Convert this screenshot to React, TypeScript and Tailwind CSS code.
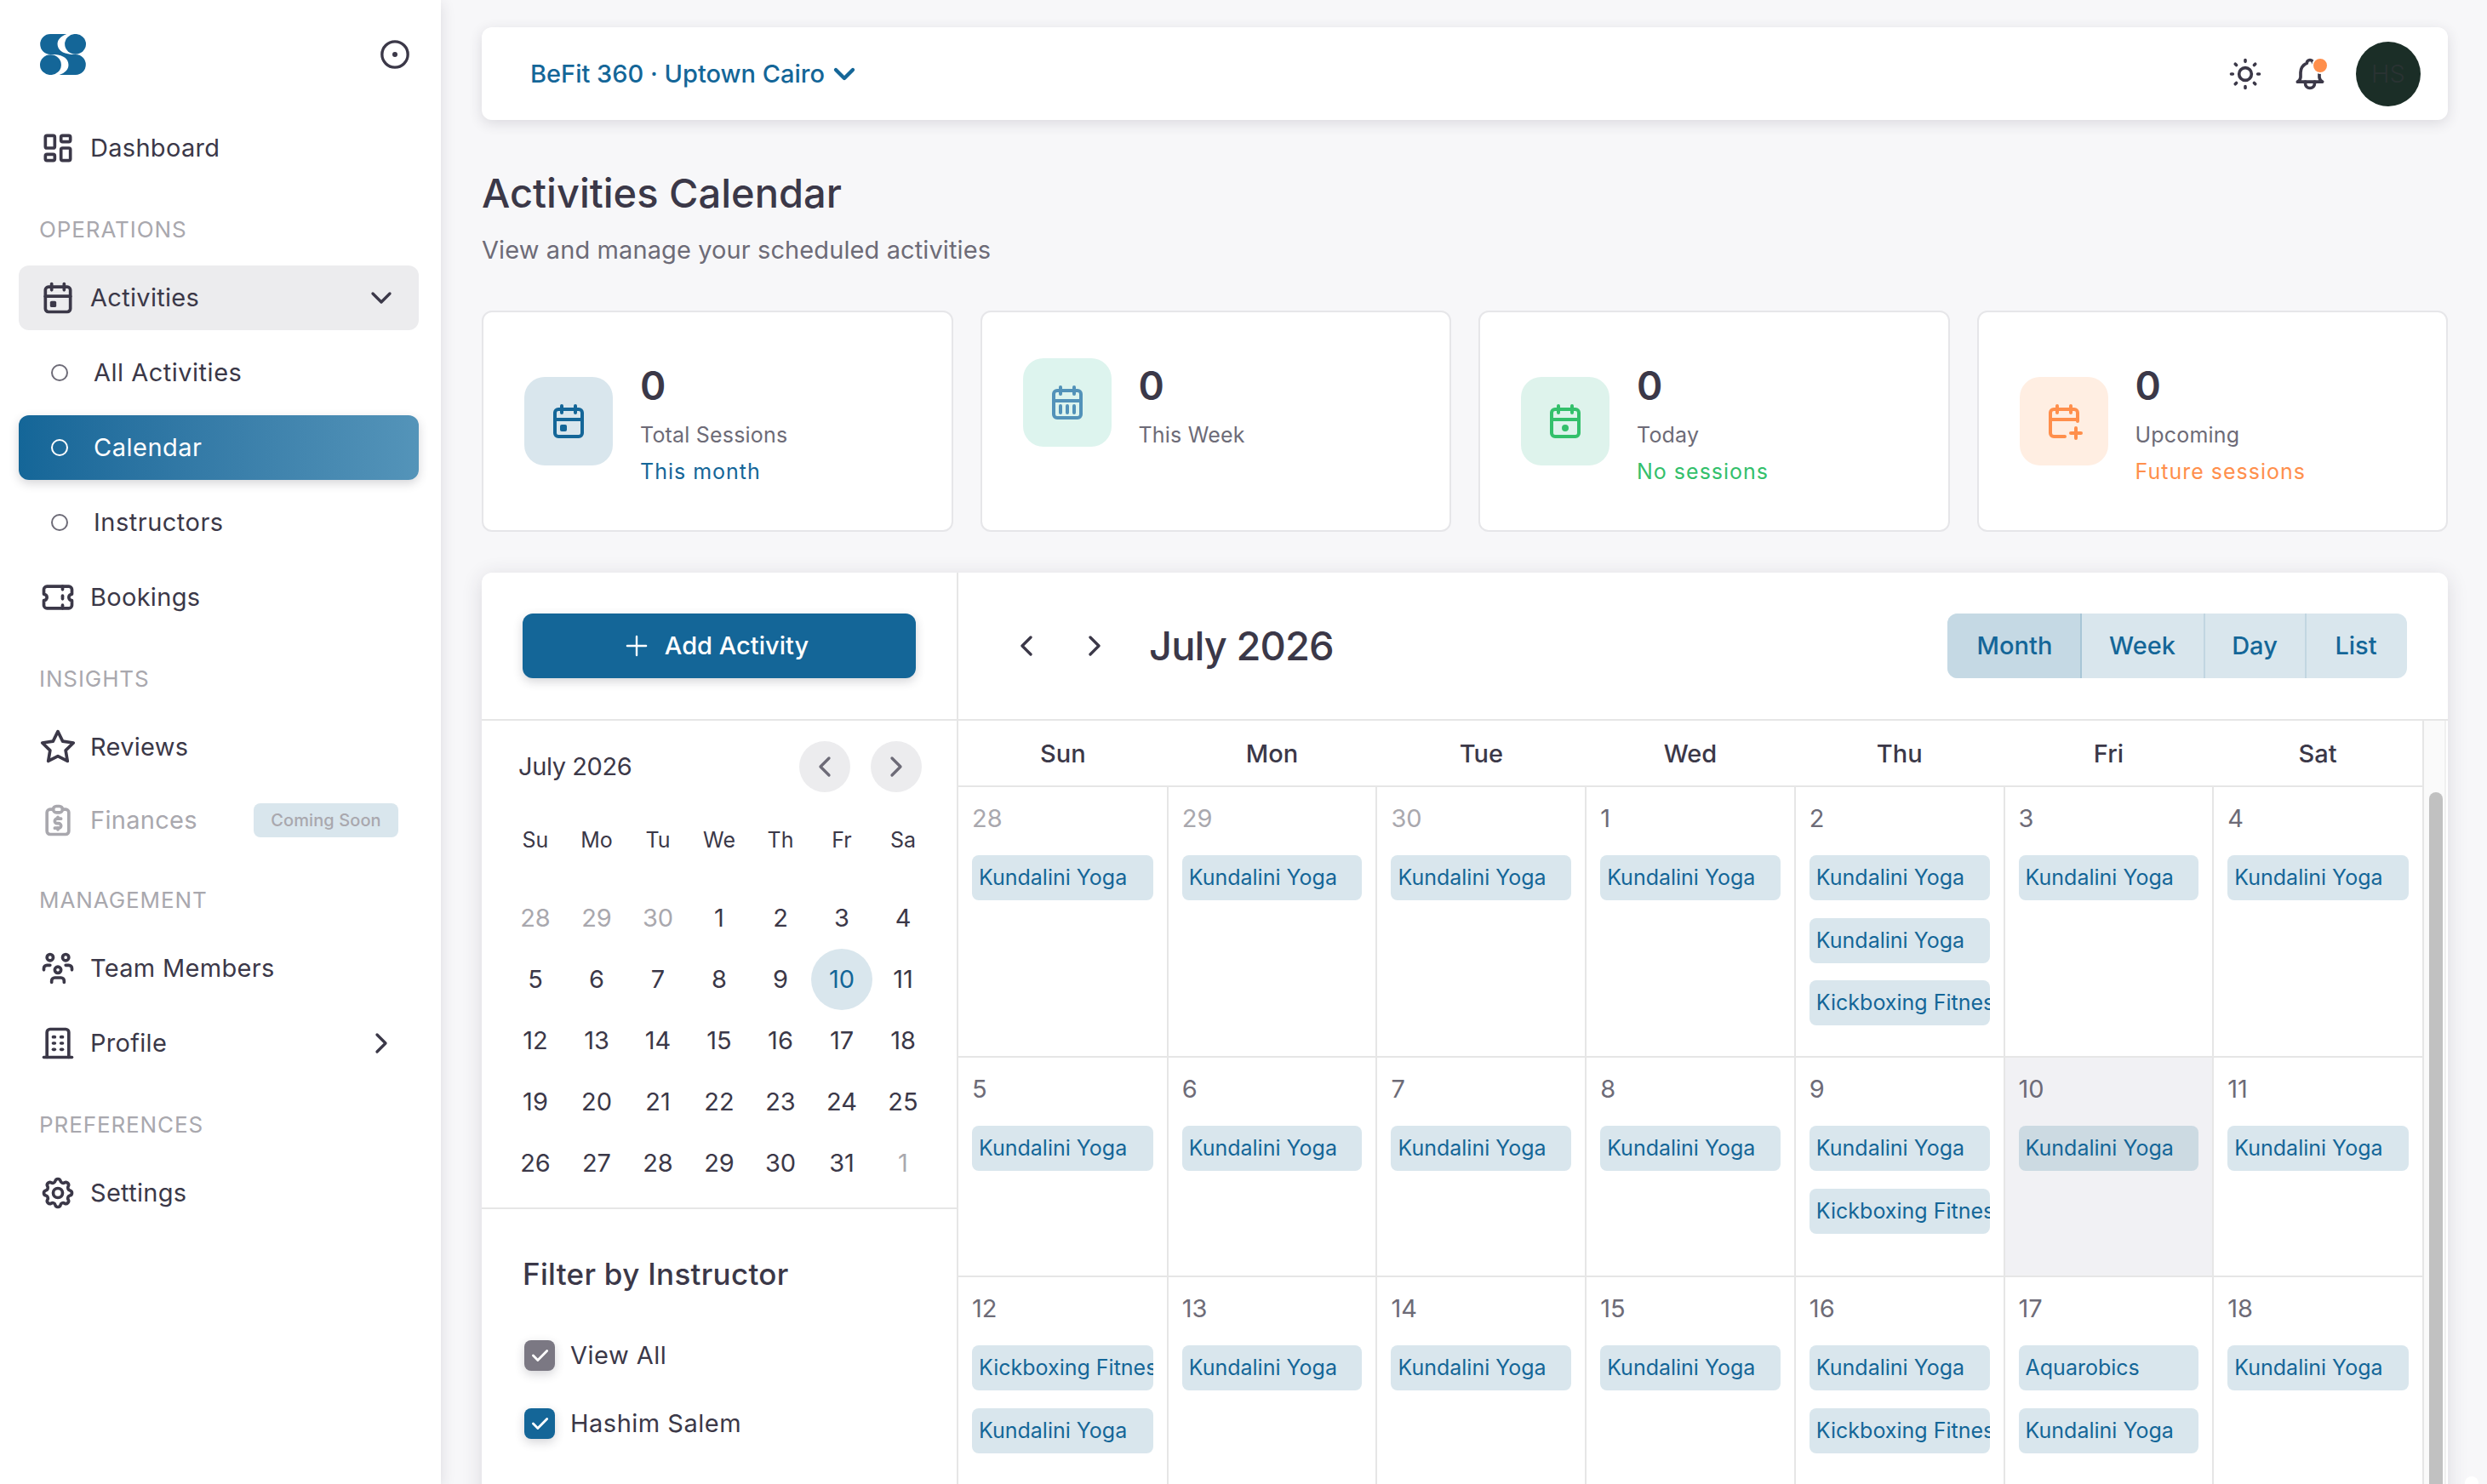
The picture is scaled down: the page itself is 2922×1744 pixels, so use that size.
import React from "react";
import type { IconType } from "react-icons";
import {
	TbBell,
	TbBuilding,
	TbCalendarEvent,
	TbCheck,
	TbChevronDown,
	TbChevronLeft,
	TbChevronRight,
	TbLayoutDashboard,
	TbPlus,
	TbReportMoney,
	TbSettings,
	TbStar,
	TbSun,
	TbTicket,
	TbUsersGroup,
} from "react-icons/tb";

const K = "Kundalini Yoga";
const B = "Kickboxing Fitness";

const weeks = [
	{
		height: "h-[318px]",
		days: [
			{ day: 28, muted: true, events: [K] },
			{ day: 29, muted: true, events: [K] },
			{ day: 30, muted: true, events: [K] },
			{ day: 1, events: [K] },
			{ day: 2, events: [K, K, B] },
			{ day: 3, events: [K] },
			{ day: 4, events: [K] },
		],
	},
	{
		height: "h-[258px]",
		days: [
			{ day: 5, events: [K] },
			{ day: 6, events: [K] },
			{ day: 7, events: [K] },
			{ day: 8, events: [K] },
			{ day: 9, events: [K, B] },
			{ day: 10, today: true, events: [K] },
			{ day: 11, events: [K] },
		],
	},
	{
		height: "h-[258px]",
		days: [
			{ day: 12, events: [B, K] },
			{ day: 13, events: [K] },
			{ day: 14, events: [K] },
			{ day: 15, events: [K] },
			{ day: 16, events: [K, B] },
			{ day: 17, events: ["Aquarobics", K] },
			{ day: 18, events: [K] },
		],
	},
] as {
	height: string;
	days: { day: number; muted?: boolean; today?: boolean; events: string[] }[];
}[];

const miniDays = [
	28, 29, 30, 1, 2, 3, 4, 5, 6, 7, 8, 9, 10, 11, 12, 13, 14, 15, 16, 17, 18, 19,
	20, 21, 22, 23, 24, 25, 26, 27, 28, 29, 30, 31, 1,
];

function Logo() {
	return (
		<svg width="54" height="48" viewBox="0 0 53.4 47.4" fill="#146698">
			<path d="M12 0H31C24 2.5 20.3 6.5 20.3 11.7C20.3 18 26 23 36 23.6H12A11.8 11.8 0 0 1 12 0Z" />
			<ellipse cx="41.1" cy="11.7" rx="12.3" ry="11.8" />
			<path d="M41.4 47.4H22.4C29.4 44.9 33.1 40.9 33.1 35.7C33.1 29.4 27.4 24.4 17.4 23.8H41.4A11.8 11.8 0 0 1 41.4 47.4Z" />
			<ellipse cx="12.3" cy="35.7" rx="12.3" ry="11.8" />
		</svg>
	);
}

function CalendarIcon({ type }: { type: string }) {
	return (
		<svg
			width="48"
			height="48"
			viewBox="0 0 24 24"
			fill="none"
			stroke="currentColor"
			strokeWidth="2"
			strokeLinecap="round"
			strokeLinejoin="round"
		>
			{type === "plus" ? (
				<path d="M12.5 21H6a2 2 0 0 1-2-2V7a2 2 0 0 1 2-2h12a2 2 0 0 1 2 2v5M16 19h6M19 16v6" />
			) : (
				<rect x="4" y="5" width="16" height="16" rx="2" />
			)}
			<path d="M16 3v4M8 3v4M4 11h16" />
			{type === "event" && <path d="M8 15h2v2H8z" />}
			{type === "month" && <path d="M8 14v4M12 14v4M16 14v4" />}
			{type === "due" && <circle cx="12" cy="16" r="1" />}
		</svg>
	);
}

function Section({ title }: { title: string }) {
	return (
		<div className="flex h-[100px] items-center pl-6 pt-[15px] text-[26px] tracking-[0.9px] text-[#a9a8ae]">
			{title}
		</div>
	);
}

function NavItem({
	icon: Icon,
	label,
	children,
	className = "",
}: {
	icon: IconType;
	label: string;
	children?: React.ReactNode;
	className?: string;
}) {
	return (
		<div
			className={`flex h-[76px] items-center gap-4 rounded-xl px-6 ${className}`}
		>
			<Icon size={44} />
			<span className="flex-1 tracking-[0.3px]">{label}</span>
			{children}
		</div>
	);
}

function SubItem({ label, active }: { label: string; active?: boolean }) {
	return (
		<div
			className={`flex h-[76px] items-center gap-[30px] rounded-xl pl-[38px] tracking-[0.5px] ${
				active
					? "bg-linear-to-r from-[#146698] to-[#5494b9] text-white shadow-[0_4px_12px_rgba(47,43,61,0.2)]"
					: ""
			}`}
		>
			<span
				className={`size-5 rounded-full border-2 ${
					active ? "border-white" : "border-[#6d6b77]"
				}`}
			/>
			{label}
		</div>
	);
}

function Sidebar() {
	return (
		<aside className="flex w-[518px] shrink-0 flex-col bg-white shadow-[0_4px_16px_rgba(47,43,61,0.14)]">
			<div className="flex h-[136px] items-start justify-between pl-[47px] pr-[34px] pt-10">
				<Logo />
				<svg
					width="40"
					height="40"
					viewBox="0 0 24 24"
					className="mt-1"
					fill="none"
					stroke="currentColor"
					strokeWidth="2"
				>
					<circle cx="12" cy="12" r="9.1" />
					<circle cx="12" cy="12" r="1.8" fill="currentColor" stroke="none" />
				</svg>
			</div>
			<nav className="flex flex-col pl-[22px] pr-[26px]">
				<NavItem icon={TbLayoutDashboard} label="Dashboard" />
				<Section title="OPERATIONS" />
				<div className="flex flex-col gap-3">
					<NavItem
						icon={TbCalendarEvent}
						label="Activities"
						className="bg-[#ececee]"
					>
						<TbChevronDown size={40} />
					</NavItem>
					<SubItem label="All Activities" />
					<SubItem label="Calendar" active />
					<SubItem label="Instructors" />
					<NavItem icon={TbTicket} label="Bookings" />
				</div>
				<Section title="INSIGHTS" />
				<NavItem icon={TbStar} label="Reviews" />
				<NavItem
					icon={TbReportMoney}
					label="Finances"
					className="mt-3 h-[72px]! text-[#a9a8ae]"
				>
					<span className="flex h-10 w-[170px] items-center justify-center rounded-lg bg-[#d9e6ed] text-[20px] font-medium tracking-[0.1px]">
						Coming Soon
					</span>
				</NavItem>
				<Section title="MANAGEMENT" />
				<NavItem icon={TbUsersGroup} label="Team Members" />
				<NavItem icon={TbBuilding} label="Profile" className="mt-3">
					<TbChevronRight size={40} />
				</NavItem>
				<Section title="PREFERENCES" />
				<NavItem icon={TbSettings} label="Settings" />
			</nav>
		</aside>
	);
}

function Header() {
	return (
		<header className="mt-8 flex h-[109px] shrink-0 items-center justify-between rounded-xl bg-white pl-[57px] pr-8 shadow-[0_4px_16px_rgba(47,43,61,0.14)]">
			<div className="flex items-center gap-[3px] font-medium text-[#146698]">
				<span>BeFit 360 · Uptown Cairo</span>
				<TbChevronDown size={40} strokeWidth={2.6} />
			</div>
			<div className="flex items-center gap-8">
				<TbSun size={44} />
				<div className="relative">
					<TbBell size={44} />
					<span className="absolute right-0 top-[2px] size-5 rounded-full border-2 border-white bg-[#ff8f4c]" />
				</div>
				<div className="flex size-[76px] items-center justify-center rounded-full bg-[#1b2e27] font-light text-[#2a3333]">
					HS
				</div>
			</div>
		</header>
	);
}

const stats = [
	{
		icon: "event",
		label: "Total Sessions",
		note: "This month",
		box: "bg-[#d9e6ed] text-[#146698]",
		noteColor: "text-[#146698]",
	},
	{
		icon: "month",
		label: "This Week",
		note: "",
		box: "bg-[#ddf4ee] text-[#5292b9]",
		noteColor: "",
	},
	{
		icon: "due",
		label: "Today",
		note: "No sessions",
		box: "bg-[#def3ec] text-[#33c06b]",
		noteColor: "text-[#33c06b]",
	},
	{
		icon: "plus",
		label: "Upcoming",
		note: "Future sessions",
		box: "bg-[#ffeee2] text-[#ff8f4c]",
		noteColor: "text-[#ff8f4c]",
	},
];

function Stats() {
	return (
		<div className="mt-12 grid grid-cols-4 gap-8">
			{stats.map((s) => (
				<div
					key={s.label}
					className="flex h-[260px] items-start rounded-xl border-2 border-[#e6e6e9] bg-white p-12"
				>
					<div className="flex items-center gap-8">
						<div
							className={`flex size-[104px] items-center justify-center rounded-3xl ${s.box}`}
						>
							<CalendarIcon type={s.icon} />
						</div>
						<div className="text-[25px]">
							<p className="text-[46px] font-semibold leading-[76px]">0</p>
							<p className="leading-10 tracking-[0.2px] text-[#6d6b77]">
								{s.label}
							</p>
							{s.note && (
								<p
									className={`-mb-[2px] leading-[46px] tracking-[1px] ${s.noteColor}`}
								>
									{s.note}
								</p>
							)}
						</div>
					</div>
				</div>
			))}
		</div>
	);
}

function MiniCalendar() {
	return (
		<div className="h-[574px] border-b-2 border-[#e6e6e6] pl-[27px] pt-6">
			<div className="flex h-[60px] items-center pl-4 pr-[41px]">
				<span className="flex-1 tracking-[-0.4px]">July 2026</span>
				<button className="flex size-[60px] items-center justify-center rounded-full bg-[#ececee] text-[#6d6b77]">
					<TbChevronLeft size={40} />
				</button>
				<button className="ml-6 flex size-[60px] items-center justify-center rounded-full bg-[#ececee] text-[#6d6b77]">
					<TbChevronRight size={40} />
				</button>
			</div>
			<div className="mt-5 grid w-[504px] grid-cols-7 text-center text-[25px] leading-[72px]">
				{["Su", "Mo", "Tu", "We", "Th", "Fr", "Sa"].map((d) => (
					<span key={d}>{d}</span>
				))}
			</div>
			<div className="mt-5 grid w-[504px] grid-cols-7 text-center leading-[72px]">
				{miniDays.map((d, i) => (
					<span
						key={i}
						className={
							i < 3 || i > 33
								? "text-[#a9a8ae]"
								: d === 10
									? "rounded-full bg-[#d9e6ed] text-[#146698]"
									: ""
						}
					>
						{d}
					</span>
				))}
			</div>
		</div>
	);
}

function Check({ label, color }: { label: string; color: string }) {
	return (
		<label className="flex h-20 items-center gap-[18px] tracking-[0.5px]">
			<span
				className={`flex size-9 items-center justify-center rounded-lg text-white shadow-[0_4px_12px_rgba(47,43,61,0.2)] ${color}`}
			>
				<TbCheck size={26} strokeWidth={2.6} />
			</span>
			{label}
		</label>
	);
}

function CalendarSide() {
	return (
		<div className="w-[560px] shrink-0 border-r-2 border-[#e6e6e6]">
			<div className="h-[174px] border-b-2 border-[#e6e6e6] px-12 pt-12">
				<button className="flex h-[76px] w-[462px] items-center justify-center gap-[14px] rounded-xl bg-[#146698] pr-[11px] font-medium text-white shadow-[0_4px_12px_rgba(47,43,61,0.2)]">
					<TbPlus size={38} strokeWidth={1.5} />
					Add Activity
				</button>
			</div>
			<MiniCalendar />
			<div className="pl-12 pt-[52px]">
				<h3 className="text-[35px] font-medium leading-[48px] tracking-[0.3px]">
					Filter by Instructor
				</h3>
				<div className="mt-8 pl-[2px]">
					<Check label="View All" color="bg-[#7b7883]" />
					<Check label="Hashim Salem" color="bg-[#146698]" />
				</div>
			</div>
		</div>
	);
}

function MonthView() {
	return (
		<div className="flex min-w-0 flex-1 flex-col">
			<div className="flex h-[174px] shrink-0 items-center border-b-2 border-[#e6e6e6] pl-[60px] pr-12">
				<TbChevronLeft size={40} />
				<TbChevronRight size={40} className="ml-10" />
				<h2 className="ml-[44px] flex-1 text-[47px] font-medium tracking-[-0.9px]">
					July 2026
				</h2>
				<div className="flex h-[76px] overflow-hidden rounded-xl bg-[#d9e6ed] text-center font-medium leading-[76px] text-[#146698]">
					<button className="w-[158px] border-r-2 border-[#a8c6d7] bg-[#c5d9e4] pl-[2px]">
						Month
					</button>
					<button className="w-[145px] border-r-2 border-[#c2d6e1] pr-px">
						Week
					</button>
					<button className="w-[119px] border-r-2 border-[#c2d6e1] pr-px">
						Day
					</button>
					<button className="w-[118px] pr-[2px]">List</button>
				</div>
			</div>
			<div className="flex min-h-0 flex-1 pr-[2px]">
				<div className="w-[1722px] border-r-2 border-[#e6e6e6]">
					<div className="grid h-[78px] grid-cols-7 border-b-2 border-[#e6e6e6] text-center font-medium leading-[77px]">
						{["Sun", "Mon", "Tue", "Wed", "Thu", "Fri", "Sat"].map((d) => (
							<span key={d}>{d}</span>
						))}
					</div>
					{weeks.map((week, w) => (
						<div
							key={w}
							className={`grid grid-cols-7 border-b-2 border-[#e6e6e6] ${week.height}`}
						>
							{week.days.map((d, i) => (
								<div
									key={d.day}
									className={`min-w-0 pl-4 pt-4 ${
										i < 6 ? "pr-[17px]" : "pr-4"
									} ${i > 0 ? "-ml-px border-l-2 border-[#e6e6e6]" : ""} ${
										d.today ? "bg-[#f1f1f4]" : ""
									}`}
								>
									<p
										className={`h-16 leading-[42px] ${
											d.muted ? "text-[#a9a8ae]" : "text-[#6d6b77]"
										}`}
									>
										{d.day}
									</p>
									<div className="flex flex-col gap-[20.5px]">
										{d.events.map((e, n) => (
											<div
												key={n}
												className={`h-[53px] overflow-hidden whitespace-nowrap rounded-lg pl-2 text-[25px] leading-[53px] text-[#146698] ${
													d.today ? "bg-[#ccdae2]" : "bg-[#d9e6ed]"
												}`}
											>
												{e}
											</div>
										))}
									</div>
								</div>
							))}
						</div>
					))}
				</div>
				<div className="flex-1 border-r-2 border-[#f0f0f0] bg-[#fafafa] pl-[6px] pt-[84px]">
					<div className="h-full w-4 rounded-full bg-[#c1c1c1]" />
				</div>
			</div>
		</div>
	);
}

export default function App() {
	return (
		<div className="relative flex h-[1744px] w-[2922px] overflow-hidden bg-[#f7f7f9] font-[Inter,sans-serif] text-[29px] leading-[44px] text-[#3b3848]">
			<Sidebar />
			<main className="flex min-w-0 flex-1 flex-col pl-12 pr-[46px]">
				<Header />
				<h1 className="mt-[52px] text-[47px] font-medium leading-[68px]">
					Activities Calendar
				</h1>
				<p className="mt-[10px] leading-[46px] tracking-[0.1px] text-[#6d6b77]">
					View and manage your scheduled activities
				</p>
				<Stats />
				<div className="mt-12 flex h-[1200px] shrink-0 overflow-hidden rounded-xl bg-white shadow-[0_4px_24px_rgba(47,43,61,0.14)]">
					<CalendarSide />
					<MonthView />
				</div>
			</main>
			{/* top of the floating handle that peeks in at the corner */}
			<span className="absolute -bottom-2 right-[10px] h-[17px] w-4 rounded-full bg-white" />
		</div>
	);
}
